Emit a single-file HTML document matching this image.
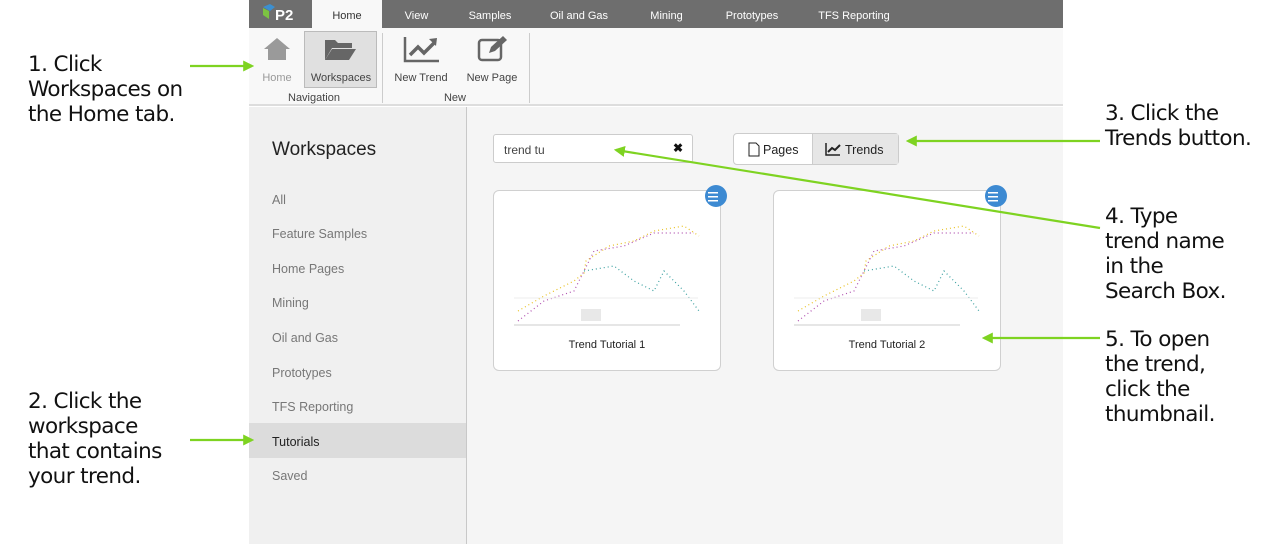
<!DOCTYPE html>
<html><head><meta charset="utf-8"><style>
*{margin:0;padding:0;box-sizing:border-box}
body{width:1263px;height:544px;background:#fff;font-family:"Liberation Sans",sans-serif;position:relative;overflow:hidden}
.abs{position:absolute}
.ann{position:absolute;font-size:21.5px;line-height:25px;color:#111;font-family:"DejaVu Sans","Liberation Sans",sans-serif;letter-spacing:-0.6px}
#top{left:249px;top:0;width:814px;height:28px;background:#6e6e6e}
.tab{position:absolute;top:0;height:28px;line-height:33px;font-size:11px;color:#fff;text-align:center}
#rib{left:249px;top:28px;width:814px;height:78px;background:#f8f8f8;border-bottom:2px solid #ddd}
.btn{position:absolute;font-size:11px;color:#444;text-align:center}
#side{left:249px;top:107px;width:218px;height:437px;background:#f0f0f0;border-right:1px solid #c8c8c8}
#main{left:467px;top:107px;width:596px;height:437px;background:#f5f5f5}
.si{position:absolute;left:23px;font-size:12.5px;color:#777}
.card{position:absolute;top:190px;width:228px;height:181px;background:#fff;border:1px solid #d0d0d0;border-radius:6px}
.card .t{position:absolute;top:148px;width:100%;text-align:center;font-size:11px;color:#222}
.ic{position:absolute;width:22px;height:22px;border-radius:50%;background:#3d8ad2}
</style></head><body>
<div class="ann" style="left:28px;top:52px">1. Click<br>Workspaces on<br>the Home tab.</div>
<div class="ann" style="left:28px;top:389px">2. Click the<br>workspace<br>that contains<br>your trend.</div>
<div class="ann" style="left:1105px;top:101px">3. Click the<br>Trends button.</div>
<div class="ann" style="left:1105px;top:204px">4. Type<br>trend name<br>in the<br>Search Box.</div>
<div class="ann" style="left:1105px;top:327px">5. To open<br>the trend,<br>click the<br>thumbnail.</div>

<div id="top" class="abs">
 <svg class="abs" style="left:12px;top:3px" width="40" height="20"><polygon points="2,4 9,1 14,4 9,8" fill="#3c8fd0"/><polygon points="2,5 8,8 8,16 2,12" fill="#7cc242"/><text x="14" y="17" font-size="15" font-weight="bold" fill="#fff" font-family="Liberation Sans">P2</text></svg>
 <div class="tab" style="left:63px;width:70px;background:#f8f8f8;color:#333">Home</div>
 <div class="tab" style="left:145px;width:45px">View</div>
 <div class="tab" style="left:215px;width:52px">Samples</div>
 <div class="tab" style="left:295px;width:70px">Oil and Gas</div>
 <div class="tab" style="left:395px;width:45px">Mining</div>
 <div class="tab" style="left:470px;width:66px">Prototypes</div>
 <div class="tab" style="left:565px;width:80px">TFS Reporting</div>
</div>
<div id="rib" class="abs">
 <div class="abs" style="left:55px;top:3px;width:73px;height:57px;background:#e0e0e0;border:1px solid #bbb"></div>
 <svg class="abs" style="left:13px;top:8px" width="30" height="26"><polygon points="15,2 2,13 6,13 6,24 24,24 24,13 28,13" fill="#9a9a9a"/></svg>
 <div class="btn" style="left:8px;top:44px;width:40px;color:#999">Home</div>
 <svg class="abs" style="left:74px;top:8px" width="34" height="26"><path d="M2 4h10l3 3h14v5H9L2 24z" fill="#666"/><path d="M9 13h24l-7 11H2z" fill="#666"/></svg>
 <div class="btn" style="left:58px;top:44px;width:68px">Workspaces</div>
 <div class="btn" style="left:30px;top:64px;width:70px">Navigation</div>
 <div class="abs" style="left:133px;top:5px;width:1px;height:70px;background:#ccc"></div>
 <svg class="abs" style="left:154px;top:7px" width="38" height="28"><path d="M2 2v24h34" stroke="#666" stroke-width="2.5" fill="none"/><path d="M7 20l8-8 6 6 10-10" stroke="#666" stroke-width="3.5" fill="none"/><polygon points="26,4 34,3 33,11" fill="#666"/></svg>
 <div class="btn" style="left:140px;top:44px;width:64px">New Trend</div>
 <svg class="abs" style="left:228px;top:7px" width="34" height="28"><rect x="2" y="5" width="22" height="20" rx="3" stroke="#666" stroke-width="2.5" fill="none"/><path d="M12 18l2-6 12-11 4 4-12 11z" fill="#666"/></svg>
 <div class="btn" style="left:212px;top:44px;width:62px">New Page</div>
 <div class="btn" style="left:190px;top:64px;width:32px">New</div>
 <div class="abs" style="left:280px;top:5px;width:1px;height:70px;background:#ccc"></div>
</div>
<div id="side" class="abs">
 <div class="abs" style="left:23px;top:32px;font-size:19px;color:#222">Workspaces</div>
 <div class="si" style="top:86px">All</div>
 <div class="si" style="top:120px">Feature Samples</div>
 <div class="si" style="top:155px">Home Pages</div>
 <div class="si" style="top:189px">Mining</div>
 <div class="si" style="top:224px">Oil and Gas</div>
 <div class="si" style="top:259px">Prototypes</div>
 <div class="si" style="top:293px">TFS Reporting</div>
 <div class="abs" style="left:0;top:316px;width:217px;height:35px;background:#dcdcdc"></div>
 <div class="si" style="top:328px;color:#222">Tutorials</div>
 <div class="si" style="top:362px">Saved</div>
</div>
<div id="main" class="abs">
 <div class="abs" style="left:26px;top:27px;width:200px;height:29px;background:#fff;border:1px solid #ccc;border-radius:3px;font-size:12px;color:#444;padding:8px 10px">trend tu<span style="position:absolute;right:9px;top:6px;font-weight:bold;color:#111">✖</span></div>
 <div class="abs" style="left:266px;top:26px;width:166px;height:32px;background:#fff;border:1px solid #ccc;border-radius:4px"></div>
 <div class="abs" style="left:345px;top:27px;width:86px;height:30px;background:#e6e6e6;border-left:1px solid #ccc"></div>
 <svg class="abs" style="left:281px;top:35px" width="12" height="15"><path d="M1 1h7l3 3v10H1z" stroke="#222" fill="none"/></svg>
 <div class="abs" style="left:296px;top:36px;font-size:12.5px;color:#222">Pages</div>
 <svg class="abs" style="left:358px;top:35px" width="16" height="14"><path d="M1 1v12h14" stroke="#222" stroke-width="1.5" fill="none"/><path d="M3 10l4-4 3 2 5-5" stroke="#222" stroke-width="2" fill="none"/></svg>
 <div class="abs" style="left:378px;top:36px;font-size:12.5px;color:#222">Trends</div>
</div>
<div class="card" style="left:493px">
 <svg class="abs" style="left:20px;top:20px" width="190" height="118"><g fill="none" stroke-dasharray="1 3" stroke-width="1.2">
 <path d="M4 100 L30 85 L60 70 L70 62 L72 50 L95 35 L120 30 L140 20 L170 15 L185 25" stroke="#e8c020"/>
 <path d="M4 110 L30 90 L60 80 L80 40 L110 35 L140 22 L180 22" stroke="#b050b0"/>
 <path d="M70 60 L100 55 L120 70 L140 80 L150 60 L170 80 L185 100" stroke="#3aa0a0"/>
 </g><rect x="67" y="98" width="20" height="12" fill="#e8e8e8"/><line x1="0" y1="114" x2="166" y2="114" stroke="#ccc"/><line x1="0" y1="87" x2="184" y2="87" stroke="#eee"/></svg>
 <div class="t">Trend Tutorial 1</div>
 <div class="ic" style="left:211px;top:-6px"></div>
</div>
<div class="card" style="left:773px">
 <svg class="abs" style="left:20px;top:20px" width="190" height="118"><g fill="none" stroke-dasharray="1 3" stroke-width="1.2">
 <path d="M4 100 L30 85 L60 70 L70 62 L72 50 L95 35 L120 30 L140 20 L170 15 L185 25" stroke="#e8c020"/>
 <path d="M4 110 L30 90 L60 80 L80 40 L110 35 L140 22 L180 22" stroke="#b050b0"/>
 <path d="M70 60 L100 55 L120 70 L140 80 L150 60 L170 80 L185 100" stroke="#3aa0a0"/>
 </g><rect x="67" y="98" width="20" height="12" fill="#e8e8e8"/><line x1="0" y1="114" x2="166" y2="114" stroke="#ccc"/><line x1="0" y1="87" x2="184" y2="87" stroke="#eee"/></svg>
 <div class="t">Trend Tutorial 2</div>
 <div class="ic" style="left:211px;top:-6px"></div>
</div>
<svg class="abs" style="left:0;top:0" width="1263" height="544">
 <defs><marker id="a" markerWidth="5" markerHeight="5" refX="4" refY="2.5" orient="auto"><path d="M0 0L5 2.5L0 5z" fill="#7ed321"/></marker></defs>
 <g stroke="#7ed321" stroke-width="2.2" fill="none" marker-end="url(#a)">
 <line x1="190" y1="66" x2="252" y2="66"/>
 <line x1="190" y1="440" x2="252" y2="440"/>
 <line x1="1100" y1="141" x2="908" y2="141"/>
 <line x1="1100" y1="228" x2="616" y2="150"/>
 <line x1="1100" y1="338" x2="984" y2="338"/>
 </g>
 <g fill="#fff"><rect x="708" y="192" width="10" height="1.5"/><rect x="708" y="196" width="10" height="1.5"/><rect x="708" y="200" width="10" height="1.5"/><rect x="988" y="192" width="10" height="1.5"/><rect x="988" y="196" width="10" height="1.5"/><rect x="988" y="200" width="10" height="1.5"/></g>
</svg>
</body></html>
